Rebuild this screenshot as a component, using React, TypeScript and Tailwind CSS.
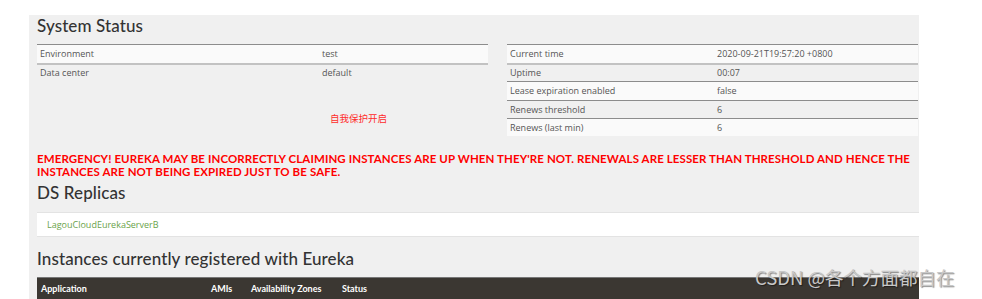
import React from "react";

const leftRows = [
    { name: "Environment", value: "test" },
    { name: "Data center", value: "default" },
];

const rightRows = [
    { name: "Current time", value: "2020-09-21T19:57:20 +0800", h: "h-[18px]" },
    { name: "Uptime", value: "00:07", h: "h-[18px]" },
    { name: "Lease expiration enabled", value: "false", h: "h-[19px]" },
    { name: "Renews threshold", value: "6", h: "h-[18px]" },
    { name: "Renews (last min)", value: "6", h: "h-[18px]" },
];

const heading = "text-[17px] text-[#333] font-['Lato',sans-serif] font-medium tracking-[0.1px]";
const cell = "text-[9px] text-[#555] font-['Open_Sans',sans-serif]";

const App: React.FC = () => {
    return (
        <div className="relative h-[299px] overflow-hidden bg-white pl-[29px] pt-[15px]">
            <div className="h-full w-[890px] bg-[#f0f0f0] pl-[8px]">
                {/* System Status */}
                <h2 className={`h-[29px] leading-[22px] ${heading}`}>System Status</h2>
                <div className="flex gap-[19px]">
                    <div className="w-[451px]">
                        <div className="border-t border-[#8c8c8c]">
                            {leftRows.map((r, i) => (
                                <div
                                    key={r.name}
                                    className={`flex h-[18px] items-center ${cell} ${
                                        i === 0 ? "bg-[#fafafa]" : "border-t-2 border-[#c2c2c2]"
                                    }`}
                                >
                                    <span className="w-[285px] pl-[3px]">{r.name}</span>
                                    <span>{r.value}</span>
                                </div>
                            ))}
                        </div>
                        <p className="mt-[30px] pl-[293px] text-[9.5px] leading-[14px] text-[#ff2a2a] font-['Noto_Sans_CJK_SC',sans-serif]">
                            自我保护开启
                        </p>
                    </div>
                    <div className="w-[411px] border-t border-[#8c8c8c]">
                        {rightRows.map((r, i) => (
                            <div
                                key={r.name}
                                className={`flex ${r.h} items-center ${cell} ${
                                    i % 2 === 0 ? "bg-[#fafafa]" : ""
                                } ${i === 1 ? "border-t-2 border-[#c2c2c2]" : i > 1 ? "border-t border-[#8c8c8c]" : ""}`}
                            >
                                <span className="w-[210px] pl-[3px]">{r.name}</span>
                                <span>{r.value}</span>
                            </div>
                        ))}
                    </div>
                </div>

                {/* Emergency */}
                <p className="mt-[17px] text-[11.5px] leading-[12.5px] font-bold tracking-[0.1px] text-[#ff0000] font-['Lato',sans-serif]">
                    EMERGENCY! EUREKA MAY BE INCORRECTLY CLAIMING INSTANCES ARE UP WHEN THEY'RE NOT. RENEWALS ARE LESSER THAN THRESHOLD AND HENCE THE
                    <br />
                    INSTANCES ARE NOT BEING EXPIRED JUST TO BE SAFE.
                </p>

                {/* DS Replicas */}
                <h2 className={`mt-[2px] h-[26px] leading-[26px] ${heading}`}>DS Replicas</h2>
                <div className="mt-[6px] flex h-[25px] items-center border-y border-[#e3e3e3] bg-white pl-[10px]">
                    <a className="text-[9px] text-[#6aa34a] font-['Open_Sans',sans-serif]">LagouCloudEurekaServerB</a>
                </div>

                {/* Instances */}
                <h2 className={`mt-[7px] h-[33px] leading-[30px] ${heading}`}>
                    Instances currently registered with Eureka
                </h2>
                <div className="flex h-[22px] items-center border-t border-[#777] bg-[#3b3732] text-[9px] font-bold text-white font-['Lato',sans-serif]">
                    <span className="w-[170px] pl-[4px]">Application</span>
                    <span className="w-[40px] pl-[4px]">AMIs</span>
                    <span className="w-[91px] pl-[4px]">Availability Zones</span>
                    <span className="pl-[4px]">Status</span>
                </div>
            </div>

            <span className="absolute left-[755px] top-[264px] text-[18.5px] text-[#c8c8c8] [text-shadow:1px_1px_1px_rgba(0,0,0,0.45)] font-['Noto_Sans_CJK_SC',sans-serif]">
                CSDN @各个方面都自在
            </span>
        </div>
    );
};

export default App;
